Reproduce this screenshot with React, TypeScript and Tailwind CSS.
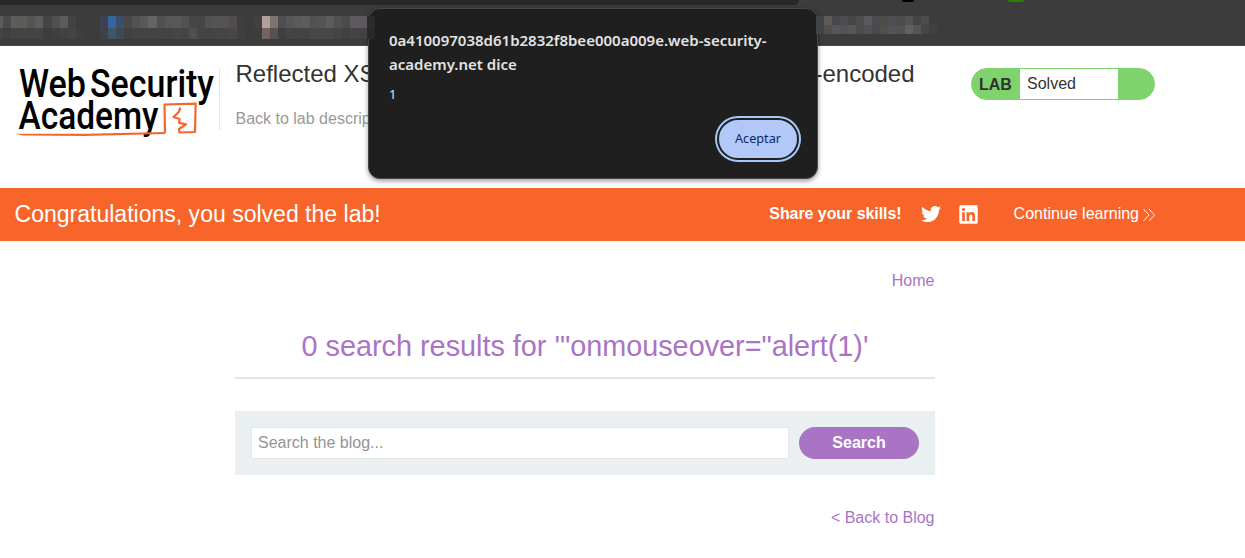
import { FaTwitter, FaLinkedin } from "react-icons/fa";

type Row = { color: string }[];

const row = (colors: string): Row => colors.split(" ").map((c) => ({ color: "#" + c }));

const leftTop = row("5c5b58 4a4a4d 5d5c59 5d5c59 545454 5c5c5a 444444 50504f 5c5c58 424242 3c3c3c 3c3c3c 3c3c3c 3c424f 34659c 3b5068 46484a 535250 5a5855 646462 505050 575757 58585a 505254 444647 444647 535250 535554 545254 504d4b 3e3e3e 3c3c3c 433f3e b39e9a 7d7371 4c4e50 54565a 5a5a5a 605c5a 525254 535456 5c5c5c 505153 4b4b4d 5e5a60 5c5a60 2e2a29");
const leftBottom = row("444444 3f3f3f 434341 444442 434343 444444 3c3c3c 3f3f3f 414141 444444 3e3e3e 3c3c3c 3c3c3c 3c4248 3d566a 3e4b55 3f4143 434343 434343 434343 444444 444444 464646 444444 4c504f 444545 444444 454545 454545 464746 404040 3c3c3c 3c3c3c 736361 565150 3d403e 444644 444444 434343 464846 464846 464846 444444 404140 444444 424242 292929");
const rightTop = row("404447 5d5c58 47484a 4d4c4f 464646 504d50 5c565e 4b4b4b 4a4c4a 504e50 4b4b4d 535456 454545 4a4d4a 3c3c3c");
const rightBottom = row("3f4347 4e4f50 55565b 535355 555658 4b4b4b 505252 4c494e 4e504c 555355 525250 606161 555555 454745 42423c");

function Cells({ cells, className }: { cells: Row; className: string }) {
  return (
    <div className="flex">
      {cells.map((c, i) => (
        <div key={i} className={"shrink-0 " + className} style={{ backgroundColor: c.color }} />
      ))}
    </div>
  );
}

function Browser() {
  return (
    <header className="flex h-[46px] flex-col border-b border-[#4a4a4a] bg-[#3c3c3c]">
      <div className="flex h-[5px] items-start">
        <div className="h-[5px] w-[799px] rounded-br-[14px] bg-[#282828]" />
        <div className="ml-[103px] h-[2px] w-3 rounded-b bg-black" />
        <div className="ml-[94px] h-[2px] w-4 rounded-b bg-[#278000]" />
      </div>
      <div className="relative z-20 flex pt-[11px]">
        <div className="-ml-[5px] w-[821px]">
          <Cells cells={leftTop} className="h-3 w-[8.09px]" />
          <Cells cells={leftBottom} className="h-[11px] w-[8.09px]" />
        </div>
        <div>
          <Cells cells={rightTop} className="h-[9px] w-[8.05px]" />
          <Cells cells={rightBottom} className="h-[9px] w-[8.05px]" />
        </div>
      </div>
    </header>
  );
}

function Logo() {
  return (
    <svg width="204" height="76" viewBox="0 0 204 76" className="mt-[17px] shrink-0 overflow-visible">
      <g fontFamily="Roboto, sans-serif" fontWeight="500" fill="#000">
        <text x="4" y="34" fontSize="38" textLength="67" lengthAdjust="spacingAndGlyphs">Web</text>
        <text x="75" y="34" fontSize="38" textLength="124" lengthAdjust="spacingAndGlyphs">Security</text>
        <text x="3.500" y="66" fontSize="38" textLength="140" lengthAdjust="spacingAndGlyphs">Academy</text>
      </g>
      <path d="M0.500 70.800 L70 70.800 L150 69 L150 71 L70 73 L8 72.500 Z" fill="#f6662b" />
      <path
        d="M150 70 L149.500 41.500 L180.700 40.700 L180 69 L164.500 69.500 L164 66 L171 61.300 L164 59.800 L164.700 56 L158.500 54 L164 48.700 L165.300 44.700"
        fill="none"
        stroke="#f6662b"
        strokeWidth="2.2"
        strokeLinejoin="round"
      />
    </svg>
  );
}

function Dialog() {
  return (
    <div className="absolute left-[368px] top-2 z-10 flex h-[171px] w-[450px] flex-col rounded-xl border border-[#484848] bg-[#1f1f1f] px-5 pt-[19px] font-['Noto_Sans',sans-serif] text-[#e3e3e3] shadow-[0_2px_5px_rgba(0,0,0,0.4)]">
      <h2 className="whitespace-nowrap text-[15px] font-semibold leading-6">
        0a410097038d61b2832f8bee000a009e.web-security-
        <br />
        academy.net dice
      </h2>
      <p className="mt-2 text-[13px] leading-5">1</p>
      <button className="mr-[-2px] mt-[14px] flex h-[42px] w-[82px] items-center justify-center self-end rounded-full border-2 border-[#1f1f1f] bg-[#b1c8f8] text-[12.7px] text-[#0b2a6b] ring-2 ring-[#a8c7fa]">
        Aceptar
      </button>
    </div>
  );
}

export default function App() {
  return (
    <div className="relative h-[558px] w-[1245px] overflow-hidden bg-white font-['Liberation_Sans',Arial,sans-serif] text-base text-[#333332]">
      <Browser />
      <section className="flex h-[142px] pl-[15px]">
        <Logo />
        <div className="mt-[22px] h-[62px] w-[701px] border-l border-[#e5e5e5] pl-[15.5px]">
          <h1 className="-mt-2 whitespace-nowrap text-2xl leading-[28px]">Reflected XSS into attribute with angle brackets HTML-encoded</h1>
          <p className="mt-[19px] leading-6 text-[#999]">Back to lab description</p>
        </div>
        <div className="ml-[51px] mt-[22px] flex h-8 w-[184px] overflow-hidden rounded-2xl border border-[#7fd36c] bg-[#7fd36c]">
          <b className="w-12 pl-[7px] leading-[31px]">LAB</b>
          <span className="w-[98px] bg-white pl-[7px] leading-[29px]">Solved</span>
        </div>
      </section>
      <section className="flex h-[53px] items-center bg-[#f7652b] pb-px pl-[14.5px] pr-[90px] text-white">
        <span className="mr-auto text-[23.04px]">Congratulations, you solved the lab!</span>
        <b className="tracking-[-0.06px]">Share your skills!</b>
        <FaTwitter className="ml-[19px]" size={20} />
        <FaLinkedin className="ml-[17.5px] mr-[0.5px] mt-px" size={21} />
        <span className="ml-[34px]">Continue learning</span>
        <svg width="12" height="14" viewBox="0 0 12 14" className="ml-1 mt-px" fill="none" stroke="currentColor" strokeWidth="0.9">
          <path d="M0.500 1 L6 7 L0.500 13 M6 1 L11.500 7 L6 13" />
        </svg>
      </section>
      <main className="mx-[235px] flex w-[700px] flex-col text-[#a974c4]">
        <a className="mr-[0.5px] mt-[28px] self-end leading-6">Home</a>
        <h2 className="mt-[32px] flex h-[54px] justify-center border-b-2 border-[#e5e5e5] text-[28.8px] leading-[42px]">
          0 search results for '"onmouseover="alert(1)'
        </h2>
        <form className="mt-8 flex h-16 gap-[10px] bg-[#eaeff2] p-4">
          <div className="w-[538px] border border-[#e5e5e5] bg-white pl-[6px] leading-[30px] text-[#949494]">Search the blog...</div>
          <button type="button" className="h-8 w-[120px] rounded-full bg-[#a974c4] font-bold text-white">Search</button>
        </form>
        <a className="mr-[0.5px] mt-[31px] self-end leading-6">&lt; Back to Blog</a>
      </main>
      <Dialog />
    </div>
  );
}
